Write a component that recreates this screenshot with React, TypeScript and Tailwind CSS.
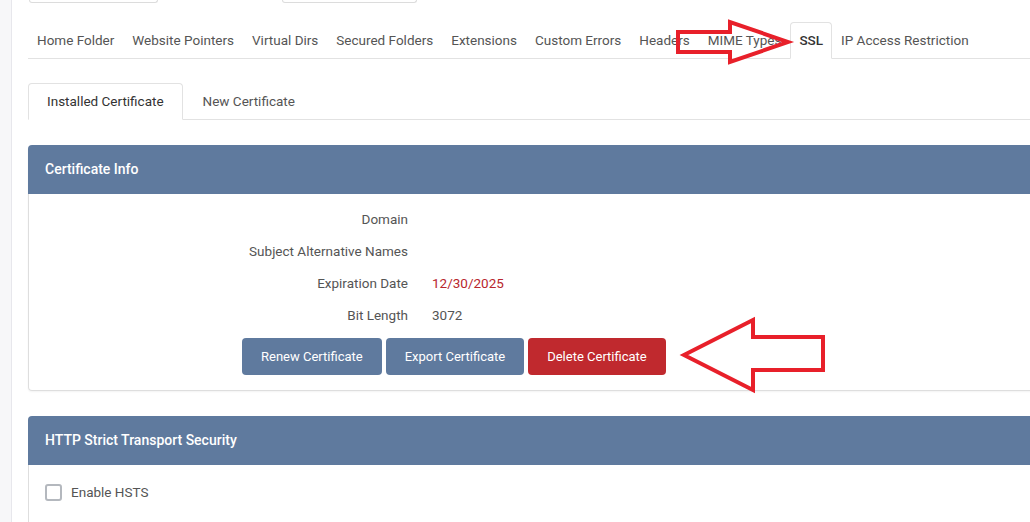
import React from 'react';

const tabs = [
  'Home Folder',
  'Website Pointers',
  'Virtual Dirs',
  'Secured Folders',
  'Extensions',
  'Custom Errors',
  'Headers',
  'MIME Types',
  'SSL',
  'IP Access Restriction',
];

const rows: { label: string; value: string; red?: boolean }[] = [
  { label: 'Domain', value: '' },
  { label: 'Subject Alternative Names', value: '' },
  { label: 'Expiration Date', value: '12/30/2025', red: true },
  { label: 'Bit Length', value: '3072' },
];

function Arrows() {
  return (
    <svg className="absolute left-0 top-0 pointer-events-none" width="1030" height="522">
      <polygon
        points="678,32 730,32 730,22 788,42 730,62 730,52 678,52"
        fill="none"
        stroke="#e8202a"
        strokeWidth="4"
        strokeLinejoin="miter"
      />
      <polygon
        points="823,337 753,337 753,320 684,355 753,390 753,370 823,370"
        fill="none"
        stroke="#e8202a"
        strokeWidth="4"
        strokeLinejoin="miter"
      />
    </svg>
  );
}

export default function App() {
  return (
    <div className="relative flex w-[1030px] h-[522px] overflow-hidden bg-white font-['Roboto','Liberation_Sans',sans-serif] text-[13.5px] text-[#555]">
      <div className="w-[12px] shrink-0 bg-[#f7f7f9] border-r border-[#e7e7ec]" />

      <div className="w-[1100px] shrink-0 pl-[16px]">
        {/* cut-off fields above */}
        <div className="flex h-[3px]">
          <div className="ml-[1px] w-[129px] border-x border-b border-[#dcdcdc] rounded-b-[4px]" />
          <div className="ml-[124px] w-[135px] border-x border-b border-[#dcdcdc] rounded-b-[4px]" />
        </div>

        {/* site tabs */}
        <div className="mt-[19px] flex border-b border-[#e2e2e2]">
          {tabs.map((t) => (
            <div
              key={t}
              className={
                t === 'SSL'
                  ? 'h-[37px] -mb-px px-2 flex items-center border border-[#e2e2e2] border-b-white rounded-t-[4px] bg-white text-[#333] font-medium'
                  : 'h-[37px] -mb-px px-2 flex items-center border border-transparent'
              }
            >
              {t}
            </div>
          ))}
        </div>

        {/* certificate tabs */}
        <div className="mt-[24px] flex border-b border-[#e2e2e2]">
          <div className="h-[37px] -mb-px px-[18px] flex items-center border border-[#e2e2e2] border-b-white rounded-t-[4px] bg-white text-[#333]">
            Installed Certificate
          </div>
          <div className="h-[37px] -mb-px px-[19px] flex items-center border border-transparent">
            New Certificate
          </div>
        </div>

        {/* certificate info */}
        <div className="mt-[25px] shadow-[0_1px_2px_rgba(0,0,0,0.05)] rounded-[4px]">
          <div className="h-[49px] flex items-center pl-[17px] bg-[#5f7a9e] rounded-t-[4px] text-white text-[14px] font-medium">
            Certificate Info
          </div>
          <div className="border-x border-b border-[#dedede] rounded-b-[4px] pt-[9px] pb-[15px]">
            {rows.map((r) => (
              <div key={r.label} className="flex h-[32px] items-center">
                <div className="w-[379px] text-right">{r.label}</div>
                <div className={r.red ? 'ml-[24px] text-[#b8262d]' : 'ml-[24px] text-[#555]'}>
                  {r.value}
                </div>
              </div>
            ))}
            <div className="mt-[7px] ml-[213px] flex gap-[4px] text-[13px]">
              <button className="h-[37px] px-[19px] rounded-[4px] bg-[#5f7a9e] text-white">
                Renew Certificate
              </button>
              <button className="h-[37px] px-[19px] rounded-[4px] bg-[#5f7a9e] text-white">
                Export Certificate
              </button>
              <button className="h-[37px] px-[19px] rounded-[4px] bg-[#c0292e] text-white">
                Delete Certificate
              </button>
            </div>
          </div>
        </div>

        {/* HSTS */}
        <div className="mt-[25px] rounded-[4px]">
          <div className="h-[49px] flex items-center pl-[17px] bg-[#5f7a9e] rounded-t-[4px] text-white text-[14px] font-medium">
            HTTP Strict Transport Security
          </div>
          <div className="border-x border-[#dedede] pt-[17px] pl-[16px] h-[80px]">
            <label className="flex items-center gap-[9px]">
              <span className="w-[17px] h-[17px] rounded-[3px] border-2 border-[#b4b8be] bg-white" />
              <span>Enable HSTS</span>
            </label>
          </div>
        </div>
      </div>

      <Arrows />
    </div>
  );
}
